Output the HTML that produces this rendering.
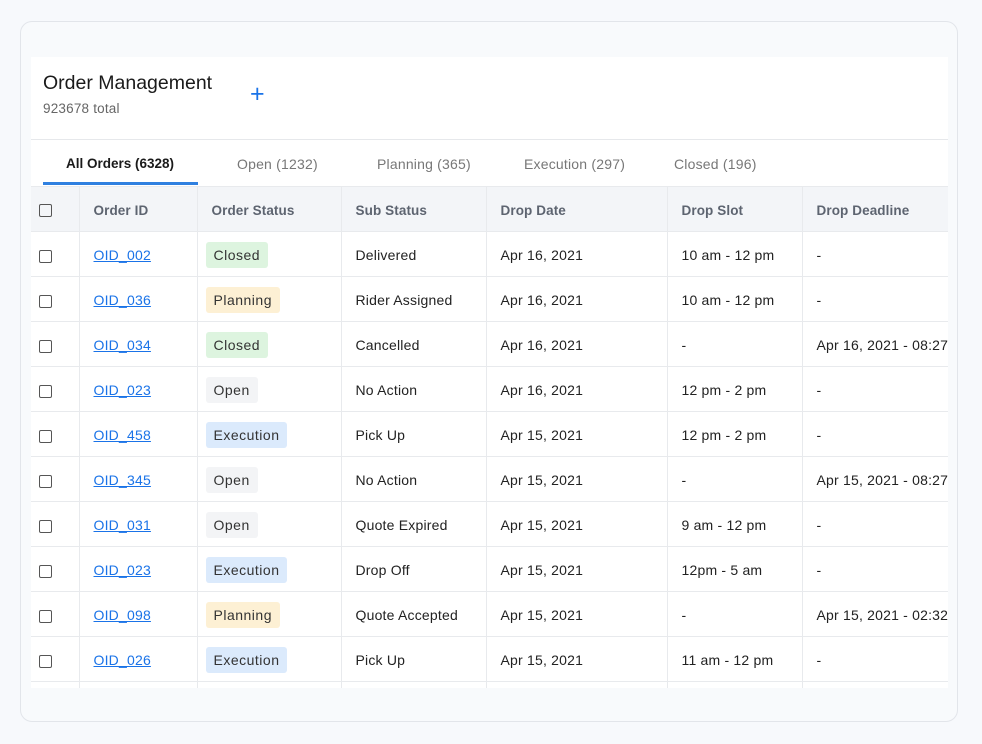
<!DOCTYPE html>
<html><head><meta charset="utf-8"><style>
*{box-sizing:border-box;margin:0;padding:0}
body{width:982px;height:744px;background:#f7f9fc;font-family:"Liberation Sans",sans-serif;color:#222;position:relative;overflow:hidden}
.card{position:absolute;left:20px;top:21px;width:938px;height:701px;border:1px solid #e2e5ea;border-radius:12px;background:#f8fafc}
.panel{position:absolute;left:31px;top:57px;width:917px;height:631px;background:#fff;overflow:hidden}
.title{position:absolute;left:12px;top:15px;font-size:19.5px;color:#1a1a1a}
.total{position:absolute;left:12px;top:44px;font-size:13.5px;color:#666;letter-spacing:0.2px}
.plus{position:absolute;left:219px;top:25px;font-size:25px;color:#1a73e8;line-height:24px}
.hr{position:absolute;left:0;top:82px;width:917px;height:1px;background:#e6e8eb}
.tab{position:absolute;top:99px;font-size:14px;color:#777;letter-spacing:0.2px}
.tab.a{color:#1a1a1a;font-weight:bold;font-size:13.5px;letter-spacing:0}
.ul{position:absolute;left:12px;top:125px;width:155px;height:3px;background:#2f80e0}
table{position:absolute;left:0;top:129px;border-collapse:collapse;table-layout:fixed;width:917px}
td,th{height:45px;border:1px solid #e8eaed;font-size:14px;text-align:left;padding:2px 0 0 14px;white-space:nowrap;overflow:hidden;font-weight:normal;letter-spacing:0.2px}
th{background:#f3f5f8;color:#5d6470;font-weight:bold;font-size:13.5px;letter-spacing:0.1px}
tr td:first-child,tr th:first-child{border-left:none;padding-left:8px}
.cb{display:inline-block;width:13px;height:13px;border:1.5px solid #555;border-radius:2px;vertical-align:middle}
a{color:#1a73e8;text-decoration:underline}
.b{display:inline-block;padding:5px 8px;border-radius:3px;font-size:14px;color:#333;margin-left:-6px;letter-spacing:0.5px}
.c{background:#ddf4df}.p{background:#fdf0d4}.o{background:#f3f4f6}.e{background:#dbeafc}
</style></head><body>
<div class="card"></div>
<div class="panel">
<div class="title">Order Management</div>
<div class="total">923678 total</div>
<div class="plus">+</div>
<div class="hr"></div>
<div class="tab a" style="left:35px">All Orders (6328)</div>
<div class="tab" style="left:206px">Open (1232)</div>
<div class="tab" style="left:346px">Planning (365)</div>
<div class="tab" style="left:493px">Execution (297)</div>
<div class="tab" style="left:643px">Closed (196)</div>
<div class="ul"></div>
<table>
<colgroup><col style="width:48px"><col style="width:118px"><col style="width:144px"><col style="width:145px"><col style="width:181px"><col style="width:135px"><col style="width:146px"></colgroup>
<tr><th><span class="cb"></span></th><th>Order ID</th><th>Order Status</th><th>Sub Status</th><th>Drop Date</th><th>Drop Slot</th><th>Drop Deadline</th></tr>
<tr><td><span class="cb"></span></td><td><a>OID_002</a></td><td><span class="b c">Closed</span></td><td>Delivered</td><td>Apr 16, 2021</td><td>10 am - 12 pm</td><td>-</td></tr>
<tr><td><span class="cb"></span></td><td><a>OID_036</a></td><td><span class="b p">Planning</span></td><td>Rider Assigned</td><td>Apr 16, 2021</td><td>10 am - 12 pm</td><td>-</td></tr>
<tr><td><span class="cb"></span></td><td><a>OID_034</a></td><td><span class="b c">Closed</span></td><td>Cancelled</td><td>Apr 16, 2021</td><td>-</td><td>Apr 16, 2021 - 08:27</td></tr>
<tr><td><span class="cb"></span></td><td><a>OID_023</a></td><td><span class="b o">Open</span></td><td>No Action</td><td>Apr 16, 2021</td><td>12 pm - 2 pm</td><td>-</td></tr>
<tr><td><span class="cb"></span></td><td><a>OID_458</a></td><td><span class="b e">Execution</span></td><td>Pick Up</td><td>Apr 15, 2021</td><td>12 pm - 2 pm</td><td>-</td></tr>
<tr><td><span class="cb"></span></td><td><a>OID_345</a></td><td><span class="b o">Open</span></td><td>No Action</td><td>Apr 15, 2021</td><td>-</td><td>Apr 15, 2021 - 08:27</td></tr>
<tr><td><span class="cb"></span></td><td><a>OID_031</a></td><td><span class="b o">Open</span></td><td>Quote Expired</td><td>Apr 15, 2021</td><td>9 am - 12 pm</td><td>-</td></tr>
<tr><td><span class="cb"></span></td><td><a>OID_023</a></td><td><span class="b e">Execution</span></td><td>Drop Off</td><td>Apr 15, 2021</td><td>12pm - 5 am</td><td>-</td></tr>
<tr><td><span class="cb"></span></td><td><a>OID_098</a></td><td><span class="b p">Planning</span></td><td>Quote Accepted</td><td>Apr 15, 2021</td><td>-</td><td>Apr 15, 2021 - 02:32</td></tr>
<tr><td><span class="cb"></span></td><td><a>OID_026</a></td><td><span class="b e">Execution</span></td><td>Pick Up</td><td>Apr 15, 2021</td><td>11 am - 12 pm</td><td>-</td></tr>
<tr><td></td><td></td><td></td><td></td><td></td><td></td><td></td></tr>
</table>
</div>
</body></html>
